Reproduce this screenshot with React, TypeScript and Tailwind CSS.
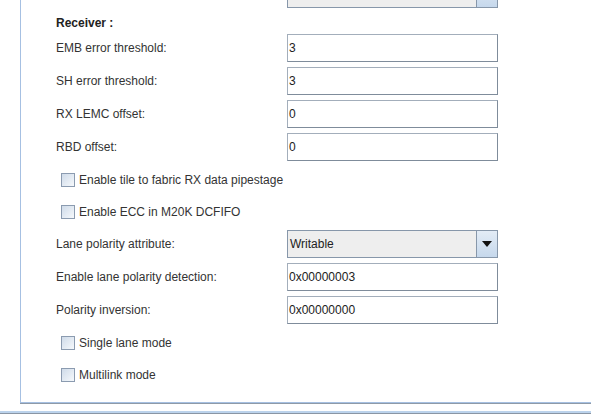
import type { ReactNode } from 'react';

const font = { fontFamily: '"Liberation Sans", Arial, sans-serif' };

function Field({ value }: { value: string }) {
  return (
    <div className="w-[211px] h-[28px] flex items-center bg-white border border-[#a3aebb] border-r-[#7f8c9b] border-b-[#7f8c9b] pl-[1px] text-[12px] text-[#222]">
      {value}
    </div>
  );
}

function Combo({ value }: { value: string }) {
  return (
    <div className="w-[211px] h-[28px] flex bg-[#eeeeee] border border-[#8797aa]">
      <div className="flex-1 flex items-center pl-[2px] text-[12px] text-[#222]">{value}</div>
      <div className="w-[21px] h-full flex items-center justify-center border-l border-[#8797aa] bg-gradient-to-b from-[#e3ecf6] to-[#c6d8ec]">
        <svg width="10" height="6" viewBox="0 0 10 6">
          <path d="M0 0 L10 0 L5 6 Z" fill="#111" />
        </svg>
      </div>
    </div>
  );
}

function Row({ label, children }: { label: string; children: ReactNode }) {
  return (
    <div className="h-[28px] flex items-center">
      <div className="w-[231px] text-[12px] text-[#333]">{label}</div>
      {children}
    </div>
  );
}

function Check({ label }: { label: string }) {
  return (
    <div className="h-[27px] flex items-center pl-[5px]">
      <div className="w-[14px] h-[14px] border border-[#8b9bb0] bg-gradient-to-br from-[#cfdbe9] to-[#f6f9fc]" />
      <span className="ml-[4px] text-[12px] text-[#333]">{label}</span>
    </div>
  );
}

export default function App() {
  return (
    <div className="w-[591px] h-[415px] overflow-hidden bg-white flex flex-col" style={font}>
      {/* group panel, top part scrolled out of view */}
      <div className="ml-[20px] w-[640px] mt-[-30px] pt-[10px] pl-[35px] pb-[14px] border-l border-b border-[#a6c0e2] shadow-[0_1px_0_#8e9aa8]">
        <Row label="">
          <Combo value="" />
        </Row>
        <div className="mt-[7px] h-[16px] flex items-center text-[12px] font-bold text-[#222]">Receiver :</div>
        <div className="mt-[3px] flex flex-col gap-[5px]">
          <Row label="EMB error threshold:">
            <Field value="3" />
          </Row>
          <Row label="SH error threshold:">
            <Field value="3" />
          </Row>
          <Row label="RX LEMC offset:">
            <Field value="0" />
          </Row>
          <Row label="RBD offset:">
            <Field value="0" />
          </Row>
          <Check label="Enable tile to fabric RX data pipestage" />
          <Check label="Enable ECC in M20K DCFIFO" />
          <Row label="Lane polarity attribute:">
            <Combo value="Writable" />
          </Row>
          <Row label="Enable lane polarity detection:">
            <Field value="0x00000003" />
          </Row>
          <Row label="Polarity inversion:">
            <Field value="0x00000000" />
          </Row>
          <Check label="Single lane mode" />
          <Check label="Multilink mode" />
        </div>
      </div>
      <div className="mt-[8px] h-[3px] border-t-2 border-[#bcd3ec] border-b border-b-[#8a96a4]" />
    </div>
  );
}
